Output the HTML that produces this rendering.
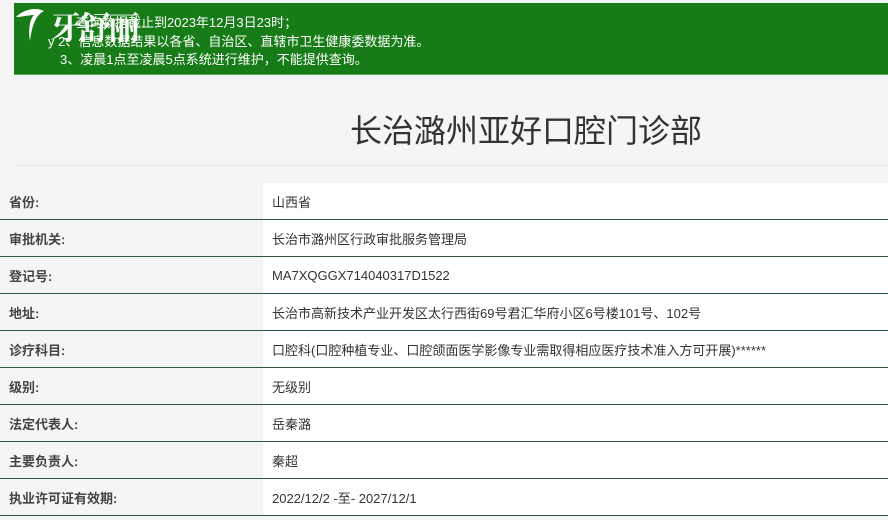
<!DOCTYPE html>
<html><head><meta charset="utf-8"><style>
body{margin:0;width:888px;height:520px;overflow:hidden;background:#f5f5f5;font-family:"Liberation Sans","Noto Sans CJK SC",sans-serif;position:relative}
.banner{position:absolute;left:14px;top:3px;width:874px;height:71px;background:#177c17;border-bottom:1px solid #4caf50;color:#fff;font-size:13px}
.banner div{position:absolute;white-space:nowrap}
.logo{position:absolute;left:36px;top:0px;color:#fff;font-family:"Noto Serif CJK SC",serif;font-weight:bold;font-size:32px;letter-spacing:-3px;opacity:.95}
h1{position:absolute;left:0;width:1052px;top:106px;margin:0;text-align:center;font-weight:normal;font-size:32px;color:#333}
.hr{position:absolute;left:14px;right:0;top:165px;border-top:1px solid #e6e6e6}
table{position:absolute;left:0;top:183px;width:888px;border-collapse:collapse;font-size:13px;color:#333}
td{height:36px;border-bottom:1px solid #2d5a3d;padding:0;}
td.l{width:263px;padding-left:9px;box-sizing:border-box;font-weight:bold;color:#444}
td.v{background:#fff;padding-left:9px}
</style></head><body>
<div class="banner">
<svg style="position:absolute;left:0;top:2px" width="36" height="40" viewBox="0 0 36 40"><path d="M2 12 C10 4 22 2 30 6 C22 10 18 20 16 36 C14 24 16 14 20 10 C14 10 8 12 2 12Z" fill="#fff"/></svg>
<div style="left:62px;top:9px">查询数据截止到2023年12月3日23时；</div>
<div style="left:34px;top:28px">y 2、信息数据结果以各省、自治区、直辖市卫生健康委数据为准。</div>
<div style="left:46px;top:46px">3、凌晨1点至凌晨5点系统进行维护，不能提供查询。</div>
<div class="logo">牙舒丽</div>
</div>
<h1>长治潞州亚好口腔门诊部</h1>
<div class="hr"></div>
<table>
<tr><td class="l">省份:</td><td class="v">山西省</td></tr>
<tr><td class="l">审批机关:</td><td class="v">长治市潞州区行政审批服务管理局</td></tr>
<tr><td class="l">登记号:</td><td class="v">MA7XQGGX714040317D1522</td></tr>
<tr><td class="l">地址:</td><td class="v">长治市高新技术产业开发区太行西街69号君汇华府小区6号楼101号、102号</td></tr>
<tr><td class="l">诊疗科目:</td><td class="v">口腔科(口腔种植专业、口腔颌面医学影像专业需取得相应医疗技术准入方可开展)******</td></tr>
<tr><td class="l">级别:</td><td class="v">无级别</td></tr>
<tr><td class="l">法定代表人:</td><td class="v">岳秦潞</td></tr>
<tr><td class="l">主要负责人:</td><td class="v">秦超</td></tr>
<tr><td class="l">执业许可证有效期:</td><td class="v">2022/12/2 -至- 2027/12/1</td></tr>
</table>
</body></html>
